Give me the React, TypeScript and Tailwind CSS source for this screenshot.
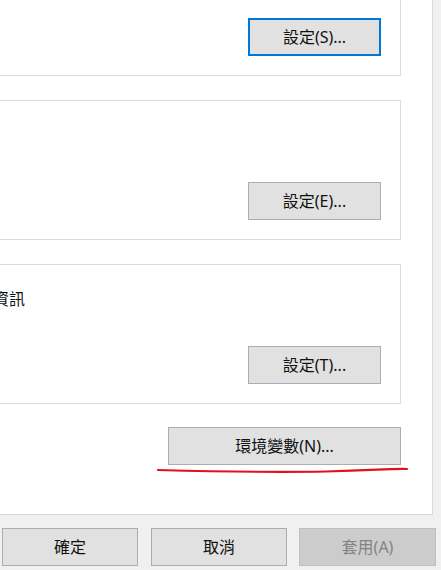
const font = "font-['Noto_Sans','Noto_Sans_CJK_TC',sans-serif]";

type BtnProps = { label: string; width?: string; focused?: boolean; disabled?: boolean };

const Btn = ({ label, width = "w-[133px]", focused, disabled }: BtnProps) => {
  let look = "border border-[#adadad] bg-[#e1e1e1] text-[#111]";
  if (focused) look = "border-2 border-[#0078d7] bg-[#e1e1e1] text-[#111]";
  if (disabled) look = "border border-[#bfbfbf] bg-[#cccccc] text-[#838383]";
  return (
    <button className={`flex h-[38px] shrink-0 items-center justify-center leading-none ${width} ${look}`}>
      {label}
    </button>
  );
};

export default function App() {
  return (
    <div className={`relative h-[570px] w-[441px] overflow-hidden bg-[#f0f0f0] text-[16px] ${font}`}>
      {/* tab page */}
      <div className="flex h-[515px] w-[433px] flex-col border-r border-b border-[#d9d9d9] bg-white pr-[31px]">
        <div className="flex h-[76px] items-start justify-end border-r border-b border-[#dcdcdc] pt-[18px] pr-[19px]">
          <Btn label="設定(S)..." focused />
        </div>

        <div className="mt-[24px] flex h-[140px] items-end justify-end border-t border-r border-b border-[#dcdcdc] pr-[19px] pb-[19px]">
          <Btn label="設定(E)..." />
        </div>

        <div className="mt-[24px] flex h-[140px] flex-col justify-between border-t border-r border-b border-[#dcdcdc] pr-[19px] pb-[19px]">
          <p className="-ml-[7px] pt-[24px] leading-[20px] text-[#111]">資訊</p>
          <div className="flex justify-end">
            <Btn label="設定(T)..." />
          </div>
        </div>

        <div className="mt-[23px] flex justify-end">
          <Btn label="環境變數(N)..." width="w-[233px]" />
        </div>
      </div>

      {/* dialog buttons */}
      <div className="mt-[13px] flex pl-[2px]">
        <Btn label="確定" width="w-[136px]" />
        <div className="ml-[13px]">
          <Btn label="取消" width="w-[136px]" />
        </div>
        <div className="ml-[12px]">
          <Btn label="套用(A)" width="w-[137px]" disabled />
        </div>
      </div>

      {/* red annotation underline */}
      <svg className="absolute left-[156px] top-[464px]" width="254" height="12" viewBox="0 0 254 12">
        <path
          d="M2 6 C 60 7.5, 120 8.5, 170 7.5 S 230 4.5, 251 5"
          fill="none"
          stroke="#e3101c"
          strokeWidth="2.2"
          strokeLinecap="round"
        />
      </svg>
    </div>
  );
}
